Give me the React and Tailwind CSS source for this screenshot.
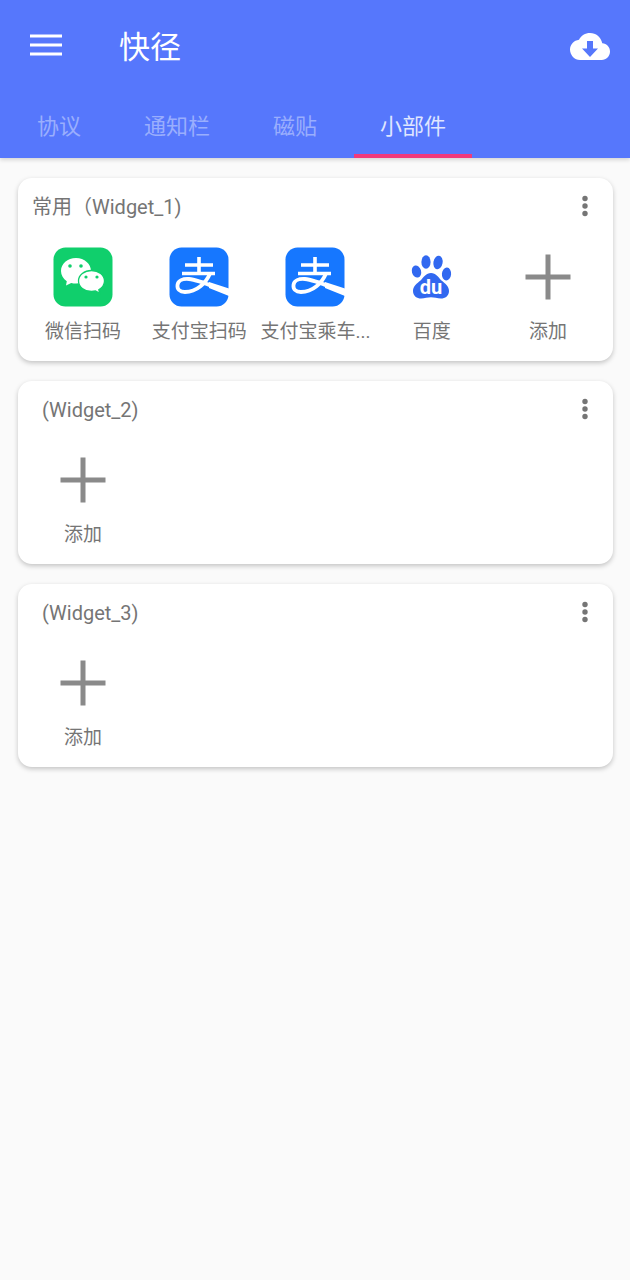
const font = { fontFamily: 'Roboto, "Noto Sans CJK SC", sans-serif' };

const WeChatIcon = () => (
  <svg viewBox="0 0 60 60" className="w-[60px] h-[60px]">
    <rect x="0.5" y="0.5" width="59" height="59" rx="12" fill="#10cf6c" />
    <path d="M23 11C14.500 11 8 16.800 8 24c0 4.200 2.300 7.800 5.800 10.200L13 38.500l5.200-2.600c1.500.4 3.100.6 4.800.6 8.500 0 15-5.600 15-12.500S31.500 11 23 11z" fill="#fff" />
    <path d="M51.500 34c0-5.800-5.800-10.500-13-10.500S25.500 28.200 25.500 34s5.800 10.500 13 10.500c1.400 0 2.800-.2 4-.5l4.300 2.300-1-3.600c3.400-2 5.700-5 5.700-8.700z" fill="#fff" stroke="#10cf6c" strokeWidth="1.300" />
    <circle cx="17" cy="19" r="1.800" fill="#10cf6c" />
    <circle cx="28" cy="19" r="1.800" fill="#10cf6c" />
    <circle cx="33" cy="30" r="1.600" fill="#10cf6c" />
    <circle cx="44" cy="30" r="1.600" fill="#10cf6c" />
  </svg>
);

const AlipayIcon = () => (
  <svg viewBox="0 0 60 60" className="w-[60px] h-[60px]">
    <rect x="0.5" y="0.5" width="59" height="59" rx="12" fill="#1677ff" />
    <path d="M16 18h28M13 26.500h33M30 10v16" stroke="#fff" strokeWidth="3.600" fill="none" />
    <path d="M41 26.500C37 36 28 45 16 45c-5.500 0-8-3-7.500-7 .5-4.500 5.500-6.500 11.500-6 10 .8 25 8 39 13" stroke="#fff" strokeWidth="3.800" fill="none" />
    <path d="M40 35l20 6.500v7.500l-20-8z" fill="#fff" />
  </svg>
);

const BaiduIcon = () => (
  <svg viewBox="0 0 60 60" className="w-[60px] h-[60px]">
    <g fill="#3168f0">
      <ellipse cx="14.500" cy="24.500" rx="4.600" ry="6.200" transform="rotate(-15 14.500 24.500)" />
      <ellipse cx="24" cy="15" rx="4.600" ry="6.800" />
      <ellipse cx="36" cy="15.500" rx="4.600" ry="6.800" transform="rotate(10 36 15.500)" />
      <ellipse cx="44.500" cy="27" rx="4.600" ry="6.400" transform="rotate(5 44.500 27)" />
      <path d="M29 26c-5 0-7 4-10.500 7.500C15 36.500 11 39 11 44c0 5 4 7.500 8 7.500 4 0 6.500-1.200 10-1.200s6 1.200 10 1.200c4 0 8-2.500 8-7.500 0-5-4-7.500-7.500-10.500C36 30 34 26 29 26z" />
    </g>
    <text x="29" y="46.500" textAnchor="middle" fill="#fff" fontSize="20" fontWeight="700" fontFamily="Roboto, sans-serif">du</text>
  </svg>
);

const PlusIcon = () => (
  <svg viewBox="0 0 60 60" className="w-[60px] h-[60px]">
    <path d="M30 7.500v45M7.500 30h45" stroke="#8a8a8a" strokeWidth="5" fill="none" />
  </svg>
);

const AppItem = ({ icon, label }) => (
  <div className="flex flex-col items-center min-w-0">
    {icon}
    <span className="mt-[11px] text-[19px] leading-[28px] text-[#757575] whitespace-nowrap">{label}</span>
  </div>
);

const WidgetCard = ({ title, items, titleClass }) => (
  <div className="bg-white rounded-[14px] h-[183px] shadow-[0_2px_5px_rgba(0,0,0,0.22)] flex flex-col">
    <div className={`flex items-center justify-between h-[58px] pr-[25px] ${titleClass}`}>
      <span className="text-[20px] leading-[28px] text-[#757575]">{title}</span>
      <svg viewBox="0 0 6 22" className="w-[6px] h-[22px] mb-[3px]">
        <circle cx="3" cy="3.500" r="2.700" fill="#757575" />
        <circle cx="3" cy="11" r="2.700" fill="#757575" />
        <circle cx="3" cy="18.500" r="2.700" fill="#757575" />
      </svg>
    </div>
    <div className="grid grid-cols-5 px-[7px] mt-[11px]">
      {items.map((item) => (
        <AppItem key={item.key} icon={item.icon} label={item.label} />
      ))}
    </div>
  </div>
);

const App = () => {
  const tabs = ['协议', '通知栏', '磁贴', '小部件'];
  const add = { key: 'add', icon: <PlusIcon />, label: '添加' };
  const common = [
    { key: 'wx', icon: <WeChatIcon />, label: '微信扫码' },
    { key: 'ali', icon: <AlipayIcon />, label: '支付宝扫码' },
    { key: 'bus', icon: <AlipayIcon />, label: '支付宝乘车...' },
    { key: 'bd', icon: <BaiduIcon />, label: '百度' },
    add,
  ];

  return (
    <div className="w-[630px] h-[1280px] bg-[#fafafa] overflow-hidden" style={font}>
      {/* Header */}
      <div className="bg-[#5677fc] h-[158px] shadow-[0_2px_4px_rgba(0,0,0,0.15)] flex flex-col">
        <div className="flex items-center h-[90px] pl-[30px] pr-[20px]">
          <svg viewBox="0 0 32 22" className="w-[32px] h-[22px] shrink-0">
            <path d="M0 2h32M0 11h32M0 20h32" stroke="#fff" strokeWidth="3" fill="none" />
          </svg>
          <span className="ml-[57px] mt-[6px] text-[31px] leading-[40px] text-white">快径</span>
          <svg viewBox="0 0 40 30" className="ml-auto mt-[3px] w-[40px] h-[30px]">
            <path d="M32.300 11.300C30.900 4.800 26 1 20 1c-4.800 0-8.900 2.700-11 6.700C4 8.300 0 12.500 0 17.500 0 23.300 4.500 28 10 28h21.700C36.300 28 40 24 40 19.500c0-4.400-3.400-7.900-7.700-8.200z" fill="#fff" />
            <path d="M17 9h6v7.500h5L20 25l-8-8.500h5z" fill="#5677fc" />
          </svg>
        </div>
        <div className="flex mt-auto">
          {tabs.map((t, i) => (
            <div
              key={t}
              className={
                i === 3
                  ? 'w-[118px] h-[62px] pt-[2px] flex items-center justify-center text-[22px] text-[#dfe5ff] border-b-[4px] border-[#f0397b]'
                  : 'w-[118px] h-[62px] pt-[2px] flex items-center justify-center text-[22px] text-[#9aaefd] border-b-[4px] border-transparent'
              }
            >
              {t}
            </div>
          ))}
        </div>
      </div>

      {/* Cards */}
      <div className="flex flex-col gap-[20px] pt-[20px] pl-[18px] pr-[17px]">
        <WidgetCard title="常用（Widget_1)" titleClass="pl-[14px]" items={common} />
        <WidgetCard title="(Widget_2)" titleClass="pl-[24px]" items={[add]} />
        <WidgetCard title="(Widget_3)" titleClass="pl-[24px]" items={[add]} />
      </div>
    </div>
  );
};

export default App;
